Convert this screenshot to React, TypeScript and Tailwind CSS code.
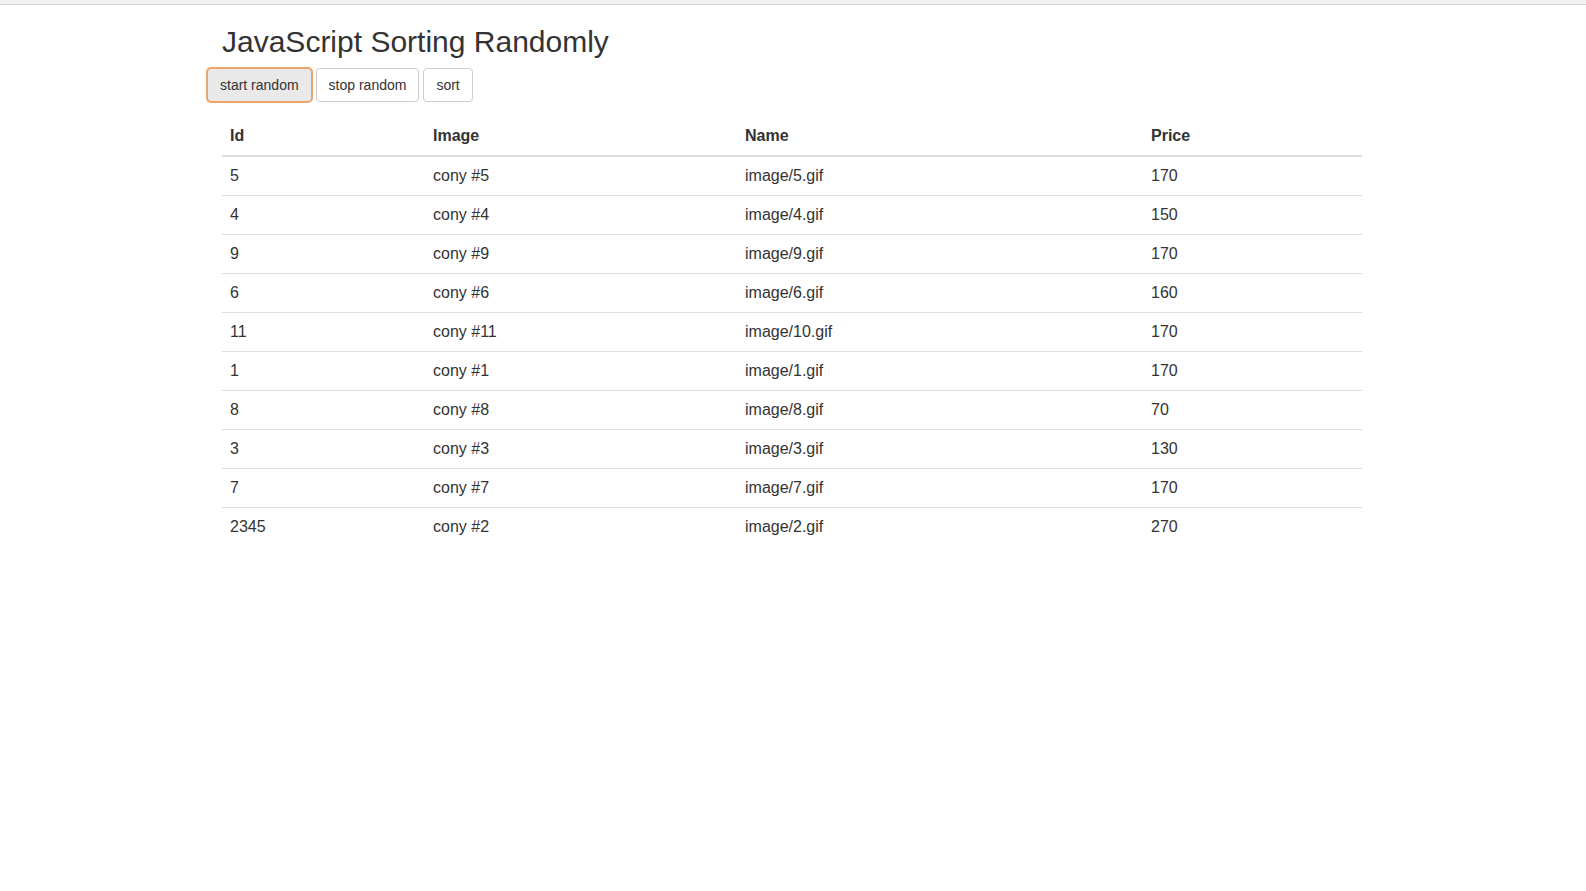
const ROWS = [
  { id: "5", image: "cony #5", name: "image/5.gif", price: "170" },
  { id: "4", image: "cony #4", name: "image/4.gif", price: "150" },
  { id: "9", image: "cony #9", name: "image/9.gif", price: "170" },
  { id: "6", image: "cony #6", name: "image/6.gif", price: "160" },
  { id: "11", image: "cony #11", name: "image/10.gif", price: "170" },
  { id: "1", image: "cony #1", name: "image/1.gif", price: "170" },
  { id: "8", image: "cony #8", name: "image/8.gif", price: "70" },
  { id: "3", image: "cony #3", name: "image/3.gif", price: "130" },
  { id: "7", image: "cony #7", name: "image/7.gif", price: "170" },
  { id: "2345", image: "cony #2", name: "image/2.gif", price: "270" },
];

export default function App() {
  return (
    <div className="min-h-screen bg-white text-[#333] font-['Liberation_Sans',Arial,sans-serif]">
      <div className="h-[5px] bg-[#f1f1f1] border-b border-[#d6d6d6]" />
      <div className="mx-auto w-[1172px] px-[15px]">
        <h2 className="mt-[20px] mb-[10px] text-[30px] leading-[33px] font-normal">JavaScript Sorting Randomly</h2>
        <div className="-ml-[15px] flex gap-[4px]">
          <button className="h-[34px] px-[12px] text-[14px] leading-[20px] rounded-[4px] bg-[#e9e9e9] border border-[#eba46c] shadow-[0_0_0_1px_#eba46c] text-[#333]">
            start random
          </button>
          <button className="h-[34px] px-[12px] text-[14px] leading-[20px] rounded-[4px] bg-white border border-[#ccc] text-[#333]">
            stop random
          </button>
          <button className="h-[34px] px-[12px] text-[14px] leading-[20px] rounded-[4px] bg-white border border-[#ccc] text-[#333]">
            sort
          </button>
        </div>
        <table className="mt-[15px] w-[1140px] border-collapse text-[16px] leading-[22px] text-left">
          <thead>
            <tr className="border-b-2 border-[#ddd]">
              <th className="w-[203px] p-[8px] font-bold">Id</th>
              <th className="w-[312px] p-[8px] font-bold">Image</th>
              <th className="w-[406px] p-[8px] font-bold">Name</th>
              <th className="w-[219px] p-[8px] font-bold">Price</th>
            </tr>
          </thead>
          <tbody>
            {ROWS.map((r, i) => (
              <tr key={r.id} className={i === 0 ? "" : "border-t border-[#ddd]"}>
                <td className="p-[8px]">{r.id}</td>
                <td className="p-[8px]">{r.image}</td>
                <td className="p-[8px]">{r.name}</td>
                <td className="p-[8px]">{r.price}</td>
              </tr>
            ))}
          </tbody>
        </table>
      </div>
    </div>
  );
}
